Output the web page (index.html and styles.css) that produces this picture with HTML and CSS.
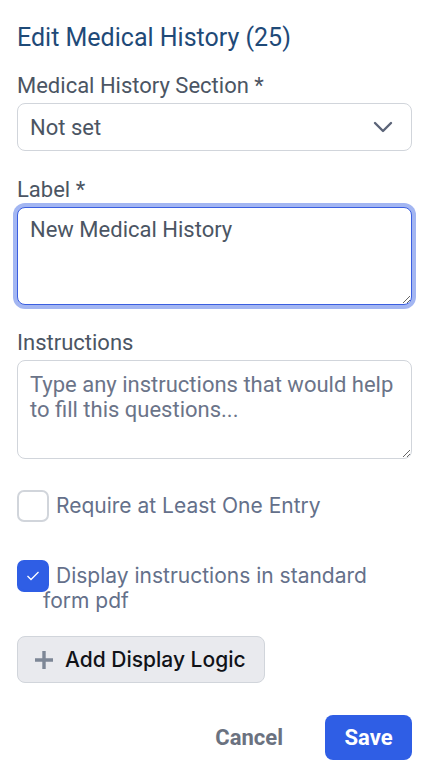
FILE: index.html
```html
<!DOCTYPE html>
<html lang="en">
<head>
    <meta charset="UTF-8">
    <meta name="viewport" content="width=device-width, initial-scale=1.0">
    <title>Edit Medical History</title>
    <link rel="stylesheet" href="styles.css">
</head>
<body>
    <div class="panel">
        <h2 class="title">Edit Medical History (25)</h2>

        <div class="field first">
            <label class="field-label" for="section">Medical History Section *</label>
            <div class="select">
                <span>Not set</span>
                <svg class="chevron" width="20" height="12" viewBox="0 0 20 12">
                    <path d="M2 2l8 8 8-8" fill="none" stroke="#5b6478" stroke-width="2.4" stroke-linecap="round" stroke-linejoin="round"/>
                </svg>
            </div>
        </div>

        <div class="field">
            <label class="field-label" for="label">Label *</label>
            <textarea id="label" class="textarea focused">New Medical History</textarea>
        </div>

        <div class="field last">
            <label class="field-label" for="instructions">Instructions</label>
            <textarea id="instructions" class="textarea" placeholder="Type any instructions that would help to fill this questions..."></textarea>
        </div>

        <div class="check-row">
            <span class="box"></span>Require at Least One Entry
        </div>

        <div class="check-row">
            <span class="box checked">
                <svg width="14" height="10" viewBox="0 0 14 10">
                    <path d="M1.5 5l3.5 3.5 7.5-7.5" fill="none" stroke="#fff" stroke-width="1.3"/>
                </svg>
            </span>Display instructions in standard form pdf
        </div>

        <button class="btn-logic">
            <svg width="20" height="20" viewBox="0 0 20 20">
                <path d="M10 1v18M1 10h18" stroke="#7d8796" stroke-width="3.4"/>
            </svg>
            Add Display Logic
        </button>

        <div class="actions">
            <button class="btn-cancel">Cancel</button>
            <button class="btn-save">Save</button>
        </div>
    </div>
</body>
</html>
```

FILE: styles.css
```css
* {
    box-sizing: border-box;
    margin: 0;
    padding: 0;
}

body {
    font-family: 'Roboto', 'Liberation Sans', sans-serif;
    background: #fff;
    color: #4b5563;
}

.panel {
    padding: 23px 18px 0 17px;
}

.title {
    font-size: 25px;
    font-weight: 400;
    line-height: 30px;
    color: #1f4a78;
    margin-bottom: 20px;
}

.field {
    margin-bottom: 25px;
}

.field.first {
    margin-bottom: 26px;
}

.field.last {
    margin-bottom: 31px;
}

.field-label {
    display: block;
    font-size: 22px;
    line-height: 26px;
    color: #4b5563;
    margin-bottom: 4px;
}

.select {
    display: flex;
    align-items: center;
    justify-content: space-between;
    height: 48px;
    padding: 0 18px 0 12px;
    border: 1px solid #d1d5db;
    border-radius: 8px;
    font-size: 22px;
    color: #4b5563;
}

.textarea {
    display: block;
    width: 100%;
    height: 98px;
    padding: 9px 12px;
    border: 1px solid #d1d5db;
    border-radius: 8px;
    font-family: 'Roboto', 'Liberation Sans', sans-serif;
    font-size: 22px;
    line-height: 26px;
    color: #4b5563;
    resize: vertical;
    outline: none;
}

#instructions {
    height: 99px;
    padding: 11px 6px 0 12px;
    line-height: 25px;
    overflow: hidden;
}

.textarea::placeholder {
    color: #6b7489;
}

.textarea.focused {
    border-color: #3b5fe0;
    box-shadow: 0 0 0 4px #a3b6f2;
}

.check-row {
    font-family: 'Inter', sans-serif;
    font-size: 21px;
    line-height: 25px;
    color: #64708a;
    padding-left: 26px;
    padding-right: 24px;
    margin-bottom: 42px;
}

.box {
    display: inline-block;
    overflow: hidden;
    width: 32px;
    height: 32px;
    margin: 0 7px -4px -26px;
    border: 2px solid #d1d5db;
    border-radius: 7px;
    vertical-align: -5px;
}

.box svg {
    display: block;
    margin: 9px auto 0;
}

.box.checked {
    background: #2f5ee5;
    border-color: #2f5ee5;
}

.btn-logic {
    display: flex;
    align-items: center;
    gap: 11px;
    height: 47px;
    padding: 0 18px 0 16px;
    background: #e9eaee;
    border: 1px solid #d1d5db;
    border-radius: 8px;
    font-family: 'Inter', sans-serif;
    font-size: 21px;
    font-weight: 500;
    color: #111318;
    margin-top: -19px;
}

.actions {
    display: flex;
    justify-content: flex-end;
    align-items: center;
    gap: 42px;
    margin-top: 32px;
}

.btn-cancel {
    background: none;
    border: none;
    font-family: 'Roboto', sans-serif;
    font-size: 22px;
    font-weight: 700;
    color: #6b7280;
}

.btn-save {
    width: 87px;
    height: 45px;
    background: #2f5ee5;
    border: none;
    border-radius: 8px;
    font-family: 'Roboto', sans-serif;
    font-size: 22px;
    font-weight: 700;
    color: #fff;
}
```
